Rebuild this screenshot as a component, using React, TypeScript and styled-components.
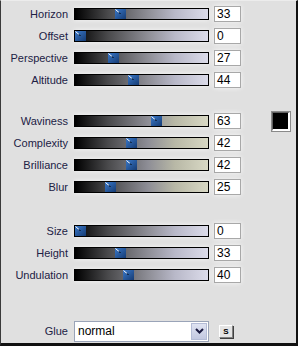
import React from 'react';
import styled, { createGlobalStyle } from 'styled-components';

const GlobalStyle = createGlobalStyle`
  html, body { margin: 0; padding: 0; background: #e0e0e0; }
`;

const Panel = styled.div`
  width: 298px; height: 346px; box-sizing: border-box; background: #e0e0e0;
  border-left: 1px solid #3a3a3a; border-right: 2px solid #111; border-bottom: 3px solid #111; border-top: 1px solid #ececec;
  padding-top: 2px; display: flex; flex-direction: column;
  font-family: 'Liberation Sans', Arial, sans-serif;
`;

const Group = styled.div<{ $gap: number }>`
  display: flex; flex-direction: column; margin-top: ${(p) => p.$gap}px;
`;

const Row = styled.div`
  display: flex; align-items: center; height: 22px;
`;

const Label = styled.div`
  width: 67px; text-align: right; font-size: 11px; color: #202044; white-space: nowrap;
`;

const Track = styled.div<{ $tone: 'cool' | 'warm' }>`
  position: relative; margin-left: 6px; width: 135px; height: 12px; box-sizing: border-box;
  border: 1px solid #000;
  background: linear-gradient(90deg, #000 0%, #4a4a4c 25%, #8e8e96 55%, ${(p) => (p.$tone === 'cool' ? '#b8b8c8' : '#b8b8a6')} 75%, ${(p) => (p.$tone === 'cool' ? '#dcdcea' : '#d8d8c4')} 100%);
  box-shadow: 0 0 5px rgba(255, 255, 255, 0.7);
`;

const Thumb = styled.svg`
  position: absolute; top: 0; width: 11px; height: 10px;
`;

const NumBox = styled.div`
  margin-left: 5px; width: 27px; height: 16px; box-sizing: border-box; background: #fff;
  border: 1px solid #a8a8a8; font-size: 12px; color: #000; padding-left: 2px; line-height: 14px;
  box-shadow: 0 0 5px rgba(255, 255, 255, 0.8);
`;

const Swatch = styled.div`
  margin-left: 31px; width: 18px; height: 19px; box-sizing: border-box; background: #000;
  border-top: 1px solid #606060; border-left: 1px solid #606060; border-right: 2px solid #fff; border-bottom: 2px solid #fff;
  outline: 1px solid #8a8a8a;
`;

const GlueRow = styled.div`
  display: flex; align-items: center; height: 22px; margin-top: 34px;
`;

const Select = styled.div`
  margin-left: 6px; width: 135px; height: 21px; box-sizing: border-box; background: #fff;
  border: 1px solid #9aa4b8; display: flex; align-items: center; justify-content: space-between;
  font-size: 12px; color: #000; padding-left: 3px;
`;

const DropBtn = styled.div`
  width: 16px; height: 17px; margin-right: 1px; box-sizing: border-box; background: linear-gradient(180deg, #dfe3f2, #c2c8e0);
  border: 1px solid #b4bcd6; display: flex; align-items: center; justify-content: center;
`;

const SmallBtn = styled.div`
  margin-left: 10px; width: 14px; height: 13px; box-sizing: border-box; background: #e4e4e4;
  border-top: 1px solid #fff; border-left: 1px solid #fff; border-right: 1px solid #808080; border-bottom: 1px solid #808080;
  box-shadow: 1px 1px 0 #404040;
  font-size: 8px; font-weight: bold; color: #000; display: flex; align-items: center; justify-content: center;
`;

const THUMB_RANGE = 121;

const Slider = ({ label, value, tone, swatch }: { label: string; value: number; tone: 'cool' | 'warm'; swatch?: boolean }) => (
  <Row>
    <Label>{label}</Label>
    <Track $tone={tone}>
      <Thumb viewBox="0 0 11 10" style={{ left: Math.round((value / 100) * THUMB_RANGE) }}>
        <defs>
          <linearGradient id="tg" x1="0" y1="0" x2="1" y2="1">
            <stop offset="0" stopColor="#3a78c8" />
            <stop offset="1" stopColor="#163c74" />
          </linearGradient>
        </defs>
        <rect x="0" y="0" width="11" height="10" fill="url(#tg)" />
        <line x1="0.5" y1="0.5" x2="4" y2="3.5" stroke="#fff" strokeWidth="1" />
        <line x1="4" y1="3.5" x2="5.5" y2="5" stroke="#000" strokeWidth="1" />
      </Thumb>
    </Track>
    <NumBox>{value}</NumBox>
    {swatch && <Swatch />}
  </Row>
);

const App = () => (
  <>
    <GlobalStyle />
    <Panel>
      <Group $gap={0}>
        <Slider label="Horizon" value={33} tone="cool" />
        <Slider label="Offset" value={0} tone="cool" />
        <Slider label="Perspective" value={27} tone="cool" />
        <Slider label="Altitude" value={44} tone="cool" />
      </Group>
      <Group $gap={19}>
        <Slider label="Waviness" value={63} tone="warm" swatch />
        <Slider label="Complexity" value={42} tone="warm" />
        <Slider label="Brilliance" value={42} tone="warm" />
        <Slider label="Blur" value={25} tone="warm" />
      </Group>
      <Group $gap={22}>
        <Slider label="Size" value={0} tone="cool" />
        <Slider label="Height" value={33} tone="cool" />
        <Slider label="Undulation" value={40} tone="cool" />
      </Group>
      <GlueRow>
        <Label>Glue</Label>
        <Select>
          normal
          <DropBtn>
            <svg width="9" height="6" viewBox="0 0 9 6">
              <path d="M1 1 L4.5 4.5 L8 1" fill="none" stroke="#1a1a40" strokeWidth="2" />
            </svg>
          </DropBtn>
        </Select>
        <SmallBtn>S</SmallBtn>
      </GlueRow>
    </Panel>
  </>
);

export default App;
